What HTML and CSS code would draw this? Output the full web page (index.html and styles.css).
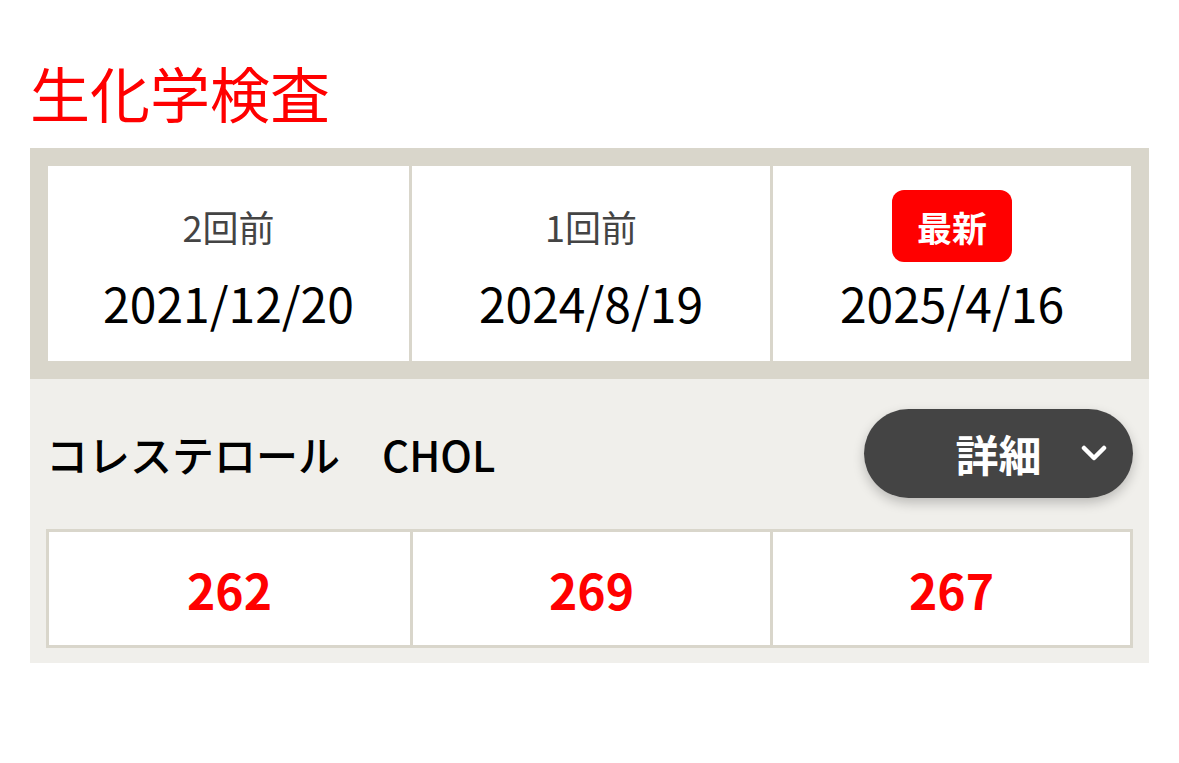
FILE: index.html
```html
<!DOCTYPE html>
<html lang="ja">
<head>
<meta charset="utf-8">
<link rel="stylesheet" href="styles.css">
</head>
<body>
<section class="panel">
  <h2 class="title">生化学検査</h2>
  <div class="dates">
    <div class="date-cell">
      <div class="label-row"><span class="label">2回前</span></div>
      <div class="date">2021/12/20</div>
    </div>
    <div class="date-cell">
      <div class="label-row"><span class="label">1回前</span></div>
      <div class="date">2024/8/19</div>
    </div>
    <div class="date-cell">
      <div class="label-row"><span class="badge">最新</span></div>
      <div class="date">2025/4/16</div>
    </div>
  </div>
  <div class="item">
    <div class="item-head">
      <div class="item-name">コレステロール　CHOL</div>
      <button class="detail-btn" type="button">
        <span class="detail-text">詳細</span>
        <svg class="chevron" width="26" height="17" viewBox="0 0 26 17"><path d="M3 3 L13 13 L23 3" fill="none" stroke="#fff" stroke-width="4.5" stroke-linecap="round" stroke-linejoin="round"/></svg>
      </button>
    </div>
    <div class="values">
      <div class="value">262</div>
      <div class="value">269</div>
      <div class="value">267</div>
    </div>
  </div>
</section>
</body>
</html>
```

FILE: styles.css
```css
* { box-sizing: border-box; }
body {
  margin: 0;
  background: #fff;
  font-family: "Noto Sans CJK JP", "Noto Sans", sans-serif;
  color: #000;
}
.panel {
  margin: 0 30px;
  padding-top: 52px;
}
.title {
  margin: 0 0 16px;
  font-size: 60px;
  font-weight: 400;
  line-height: 80px;
  color: #ff0000;
}
.dates {
  background: #d9d6cb;
  padding: 18px;
  display: grid;
  grid-template-columns: 361px 1fr 1fr;
  gap: 3px;
}
.date-cell {
  background: #fff;
  height: 195px;
  padding-top: 24px;
  display: flex;
  flex-direction: column;
  align-items: center;
}
.label-row {
  height: 72px;
  display: flex;
  align-items: center;
  justify-content: center;
}
.label {
  font-size: 36px;
  color: #444;
  line-height: 1;
}
.badge {
  display: flex;
  align-items: center;
  justify-content: center;
  width: 120px;
  height: 72px;
  border-radius: 12px;
  background: #ff0000;
  color: #fff;
  font-weight: 700;
  font-size: 35px;
  line-height: 1;
}
.date {
  margin-top: 13px;
  font-size: 48px;
  line-height: 54px;
  color: #000;
}
.item {
  background: #f0efeb;
  padding: 30px 16px 15px;
}
.item-head {
  display: flex;
  align-items: center;
  justify-content: space-between;
  height: 89px;
}
.item-name {
  font-size: 42px;
  font-weight: 500;
  line-height: 1;
}
.detail-btn {
  position: relative;
  width: 269px;
  height: 89px;
  border: none;
  border-radius: 45px;
  background: #444;
  box-shadow: 0 5px 12px rgba(0,0,0,0.22);
  color: #fff;
  font-family: inherit;
  display: flex;
  align-items: center;
  justify-content: center;
  padding: 0;
}
.detail-text {
  font-size: 43px;
  font-weight: 700;
  line-height: 1;
}
.chevron {
  position: absolute;
  right: 26px;
  top: 36px;
}
.values {
  margin-top: 31px;
  display: grid;
  grid-template-columns: 361px 1fr 1fr;
  gap: 3px;
  background: #d9d6cb;
  border: 3px solid #d9d6cb;
}
.value {
  background: #fff;
  height: 113px;
  display: flex;
  align-items: center;
  justify-content: center;
  color: #ff0000;
  font-size: 48px;
  font-weight: 700;
  line-height: 1;
}
```
